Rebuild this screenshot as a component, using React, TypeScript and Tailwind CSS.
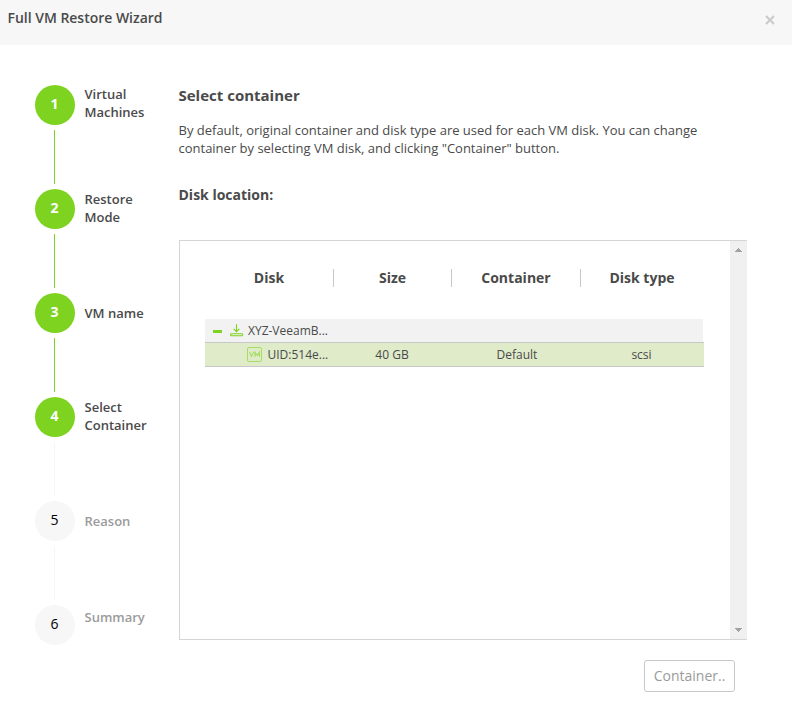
const steps = [
  { label: ["Virtual", "Machines"], done: true, pad: "pt-0" },
  { label: ["Restore", "Mode"], done: true, pad: "pt-px" },
  { label: ["VM name"], done: true, pad: "pt-[11px]" },
  { label: ["Select", "Container"], done: true, pad: "pt-px" },
  { label: ["Reason"], done: false, pad: "pt-[11px]" },
  { label: ["Summary"], done: false, pad: "pt-[3px]" },
];

function Steps() {
  return (
    <ol className="ml-[35px] w-36 shrink-0 pt-10">
      {steps.map((s, i) => {
        const next = i < steps.length - 1;
        const green = s.done && steps[i + 1]?.done;
        return (
          <li key={s.label[0]} className="flex h-[104px] gap-[9.5px]">
            <div className="flex w-10 shrink-0 flex-col items-center">
              <div
                className={
                  s.done
                    ? "flex h-10 w-10 items-center justify-center rounded-full bg-[#7ed321] pb-0.5 pr-px text-sm font-bold text-white"
                    : "flex h-10 w-10 items-center justify-center rounded-full bg-[#f7f7f7] pb-0.5 pr-px text-sm font-medium text-black"
                }
              >
                {i + 1}
              </div>
              {next && (
                <div className={green ? "mr-px mt-[5px] h-[54px] w-px bg-[#7ed321]" : "mr-px mt-[5px] h-[54px] w-px bg-[#f7f7f7]"} />
              )}
            </div>
            <div className={`${s.pad} text-[13px] font-semibold leading-[18px] ${s.done ? "text-[#4a4a4a]" : "text-[#9b9b9b]"}`}>
              {s.label.map((t) => (
                <div key={t} className="whitespace-nowrap">{t}</div>
              ))}
            </div>
          </li>
        );
      })}
    </ol>
  );
}

function RestoreIcon() {
  return (
    <svg width="14" height="13" viewBox="0 0 14 13" fill="none" stroke="#7ed321" className="shrink-0">
      <path d="M6.5 0.3V7.5M3.6 4.8L6.5 7.7L9.4 4.8" strokeWidth="1.15" />
      <rect x="0.6" y="9.7" width="12" height="2" rx="0.6" strokeWidth="1.1" />
    </svg>
  );
}

function VmIcon() {
  return (
    <svg width="15" height="15" viewBox="0 0 15 15" fill="none" stroke="#a4dd62" className="shrink-0">
      <rect x="0.5" y="0.5" width="14" height="14" rx="1.5" />
      <path d="M2.4 5L4.5 9.5L6.6 5M8 10V5.2L10.2 8.6L12.4 5.2V10" strokeWidth="1.1" />
    </svg>
  );
}

const columns = "grid grid-cols-[129px_118px_129px_123px]";

function DiskTable() {
  return (
    <div className="flex h-[400px] w-[568px] border-y border-l border-[#d5d5d5]">
      <div className="flex-1 pl-[25px] pt-7">
        <div className={`${columns} h-[18px] w-[499px] text-center text-sm font-bold leading-[18px] text-[#4a4a4a]`}>
          <div className="border-r border-[#c8c8c8]">Disk</div>
          <div className="border-r border-[#c8c8c8]">Size</div>
          <div className="border-r border-[#c8c8c8]">Container</div>
          <div className="pr-px">Disk type</div>
        </div>
        <div className="mt-8 text-xs text-[#4a4a4a]">
          <div className="flex h-[23px] w-[498px] items-center bg-[#f2f2f2] pl-2">
            <div className="mr-2 mt-px h-[3px] w-[9px] bg-[#7ed321]" />
            <RestoreIcon />
            <span className="ml-[4px]">XYZ-VeeamB...</span>
          </div>
          <div className={`${columns} h-[25px] w-[499px] items-center border-y border-[#c8c8c8] bg-[#e0ebca] text-center`}>
            <div className="flex items-center pl-[42px]">
              <VmIcon />
              <span className="ml-[5.5px]">UID:514e...</span>
            </div>
            <div className="pr-[2px]">40 GB</div>
            <div className="pl-px">Default</div>
            <div className="pr-[2px]">scsi</div>
          </div>
        </div>
      </div>
      <div className="flex w-[17px] flex-col items-center justify-between bg-[#f0f0f0] py-[7px]">
        <svg width="7" height="4" viewBox="0 0 7 4" shapeRendering="crispEdges"><path d="M0 4L3.5 0L7 4Z" fill="#a3a3a3" /></svg>
        <svg width="7" height="4" viewBox="0 0 7 4" shapeRendering="crispEdges"><path d="M0 0L3.5 4L7 0Z" fill="#a3a3a3" /></svg>
      </div>
    </div>
  );
}

export default function App() {
  return (
    <div className="h-[707px] w-[792px] overflow-hidden bg-white font-['Open_Sans',sans-serif] text-[#4a4a4a]">
      <header className="flex h-[45px] items-start justify-between bg-[#f7f7f7] pl-[7.5px] pr-[17px] pt-2">
        <h1 className="text-sm font-semibold leading-5 tracking-[-0.02px]">Full VM Restore Wizard</h1>
        <svg width="10" height="10" viewBox="0 0 10 10" className="mt-[7px]" stroke="#cbcbcb" strokeWidth="2.2">
          <path d="M1 1L9 9M9 1L1 9" />
        </svg>
      </header>
      <div className="flex">
        <Steps />
        <main className="w-[568px] pt-[39px]">
          <h2 className="-ml-[0.5px] text-[15px] font-bold leading-[22px]">Select container</h2>
          <p className="-ml-[0.5px] mt-[15px] text-[13px] leading-[18px] tracking-[-0.006px]">
            By default, original container and disk type are used for each VM disk. You can change
            <br />
            container by selecting VM disk, and clicking "Container" button.
          </p>
          <h3 className="-ml-[0.5px] mb-[35px] mt-7 text-sm font-bold leading-5">Disk location:</h3>
          <DiskTable />
          <div className="mr-3 mt-5 flex justify-end">
            <button className="h-8 w-[91px] rounded-[3px] border border-[#c8c8c8] bg-white text-sm text-[#9b9b9b]">
              Container..
            </button>
          </div>
        </main>
      </div>
    </div>
  );
}
